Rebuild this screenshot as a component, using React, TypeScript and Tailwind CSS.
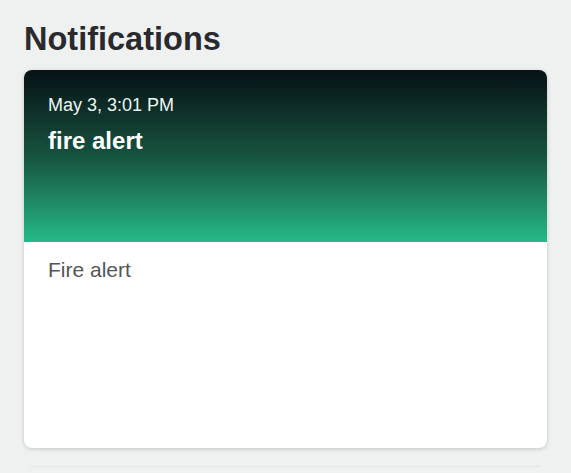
export default function App() {
  return (
    <div className="min-h-screen bg-[#eef1f0] px-6 pt-5 font-['Liberation_Sans',Arial,sans-serif]">
      <h1 className="text-[32.5px] font-bold leading-[38px] text-[#2a2a2e]">
        Notifications
      </h1>
      <div className="mt-3 h-[378px] w-[523px] overflow-hidden rounded-lg bg-white shadow-[0_1px_4px_rgba(0,0,0,0.18)]">
        <div className="h-[172px] bg-gradient-to-b from-[#071216] via-[#16543f] to-[#25bb89] px-6 pt-[25px]">
          <p className="text-[18px] leading-5 text-[#eef6f2]">May 3, 3:01 PM</p>
          <p className="mt-[12px] text-[24px] font-bold leading-7 text-white">fire alert</p>
        </div>
        <div className="px-6 pt-4">
          <p className="text-[21px] leading-6 text-[#555555]">Fire alert</p>
        </div>
      </div>
      <div className="mx-1.5 mt-[18px] h-1 border-t border-[#e2e7e6]" />
    </div>
  );
}
